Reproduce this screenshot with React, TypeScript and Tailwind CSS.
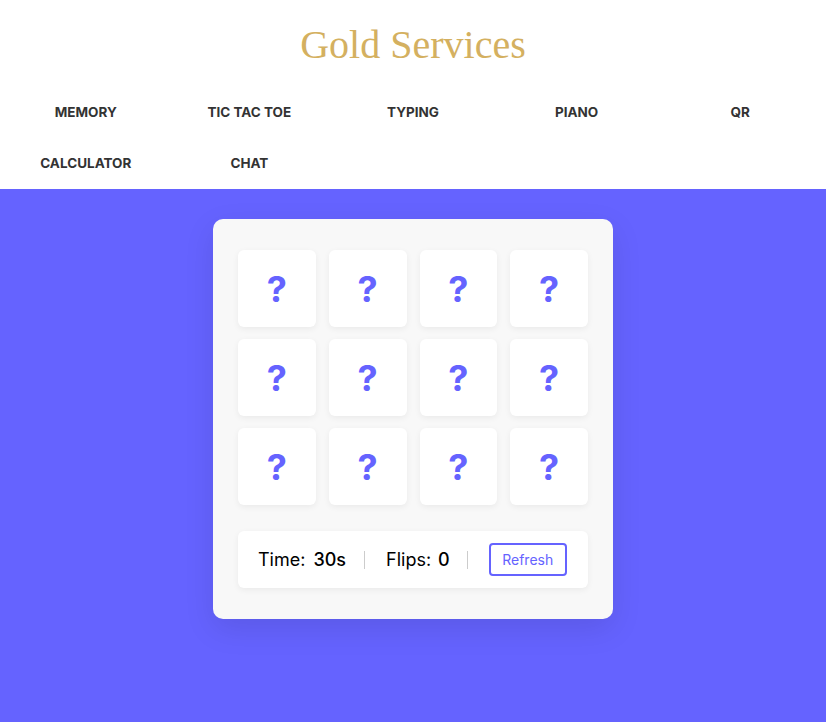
import React from 'react';

const links = ['MEMORY', 'TIC TAC TOE', 'TYPING', 'PIANO', 'QR', 'CALCULATOR', 'CHAT'];

const Tile: React.FC = () => (
    <div className="h-[77px] bg-white rounded-[6px] shadow-[0_2px_6px_rgba(0,0,0,0.06)] flex items-center justify-center">
        <span className="text-[36px] font-bold leading-none text-[#6563ff]">?</span>
    </div>
);

const App: React.FC = () => {
    return (
        <div className="min-h-[722px] flex flex-col bg-[#6563ff]" style={{ fontFamily: 'Inter, "Open Sans", sans-serif' }}>
            <header className="bg-white h-[189px]">
                <h1 className="text-center text-[40px] leading-none pt-[25px] text-[#d4b060]" style={{ fontFamily: '"Liberation Serif", serif' }}>
                    Gold Services
                </h1>
                <nav className="grid grid-cols-5 px-[4px] mt-[22px]">
                    {links.map(link => (
                        <a key={link} href="#" className="h-[51px] flex items-center justify-center text-[13.5px] font-bold text-[#333]">
                            {link}
                        </a>
                    ))}
                </nav>
            </header>
            <main className="flex-1 flex justify-center pt-[30px] pb-[103px]">
                <div className="w-[400px] h-[400px] bg-[#f8f8f8] rounded-[10px] px-[25px] pt-[31px] shadow-[0_10px_30px_rgba(0,0,0,0.1)]">
                    <div className="grid grid-cols-4 gap-x-[13px] gap-y-[12px]">
                        {Array.from({ length: 12 }).map((_, i) => <Tile key={i} />)}
                    </div>
                    <div className="mt-[26px] h-[57px] bg-white rounded-[6px] shadow-[0_2px_6px_rgba(0,0,0,0.06)] flex items-center pl-[20px] text-[18px] text-black">
                        <span>Time:</span>
                        <span className="ml-[8px] font-medium">30s</span>
                        <span className="ml-[18px] mr-[21px] w-px h-[18px] bg-[#ccc]"></span>
                        <span>Flips:</span>
                        <span className="ml-[7px] font-medium">0</span>
                        <span className="ml-[17px] mr-[21px] w-px h-[18px] bg-[#ccc]"></span>
                        <button className="w-[78px] h-[33px] border-2 border-[#6563ff] rounded-[4px] text-[14px] text-[#6563ff]">
                            Refresh
                        </button>
                    </div>
                </div>
            </main>
        </div>
    );
};

export default App;
